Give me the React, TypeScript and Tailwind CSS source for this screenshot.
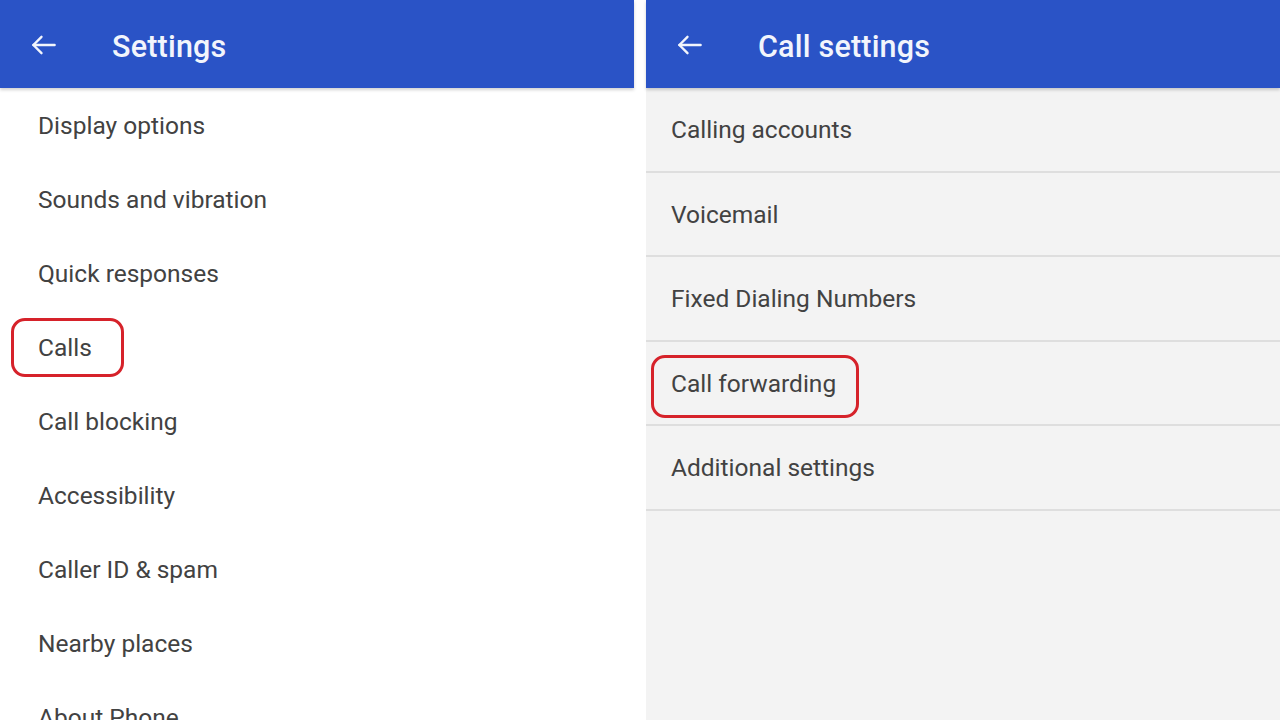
const leftItems = [
  'Display options',
  'Sounds and vibration',
  'Quick responses',
  'Calls',
  'Call blocking',
  'Accessibility',
  'Caller ID & spam',
  'Nearby places',
  'About Phone',
];

const rightItems = [
  'Calling accounts',
  'Voicemail',
  'Fixed Dialing Numbers',
  'Call forwarding',
  'Additional settings',
];

function BackArrow() {
  return (
    <svg width="30" height="30" viewBox="0 0 24 24" fill="none" stroke="currentColor" strokeWidth="1.9" strokeLinecap="round" strokeLinejoin="round">
      <path d="M20.5 12H3.5" />
      <path d="M10 5.5L3.5 12l6.5 6.5" />
    </svg>
  );
}

function Header({ title }: { title: string }) {
  return (
    <div className="h-[88px] shrink-0 bg-[#2a53c6] flex items-center text-[#f2f5fc] shadow-[0_2px_3px_rgba(0,0,0,0.18)] relative z-10">
      <div className="w-[112px] pl-[29px] pt-[2px] flex items-center">
        <BackArrow />
      </div>
      <span className="text-[30.5px] font-medium tracking-[0.2px] pt-[5px]">{title}</span>
    </div>
  );
}

export default function App() {
  return (
    <div
      className="w-[1280px] h-[720px] overflow-hidden bg-white flex gap-[12px] text-[#424242]"
      style={{ fontFamily: 'Roboto, "Noto Sans", sans-serif' }}
    >
      {/* Settings */}
      <div className="w-[634px] flex flex-col bg-white">
        <Header title="Settings" />
        <div className="flex flex-col">
          {leftItems.map((item) => (
            <div key={item} className="h-[74px] shrink-0 flex items-center pl-[38px] pt-[2px] text-[24.5px] relative">
              {item === 'Calls' && (
                <div className="absolute left-[11px] top-[8px] w-[113px] h-[59px] border-[3px] border-[#d6222a] rounded-[14px]" />
              )}
              {item}
            </div>
          ))}
        </div>
      </div>

      {/* Call settings */}
      <div className="flex-1 flex flex-col bg-[#f3f3f3]">
        <Header title="Call settings" />
        <div className="flex flex-col">
          {rightItems.map((item) => (
            <div key={item} className="h-[84.5px] shrink-0 flex items-center pl-[25px] pt-[3px] text-[24.5px] border-b-2 border-[#dedede] relative">
              {item === 'Call forwarding' && (
                <div className="absolute left-[5px] top-[13px] w-[208px] h-[63px] border-[3px] border-[#d6222a] rounded-[14px]" />
              )}
              {item}
            </div>
          ))}
        </div>
      </div>
    </div>
  );
}
